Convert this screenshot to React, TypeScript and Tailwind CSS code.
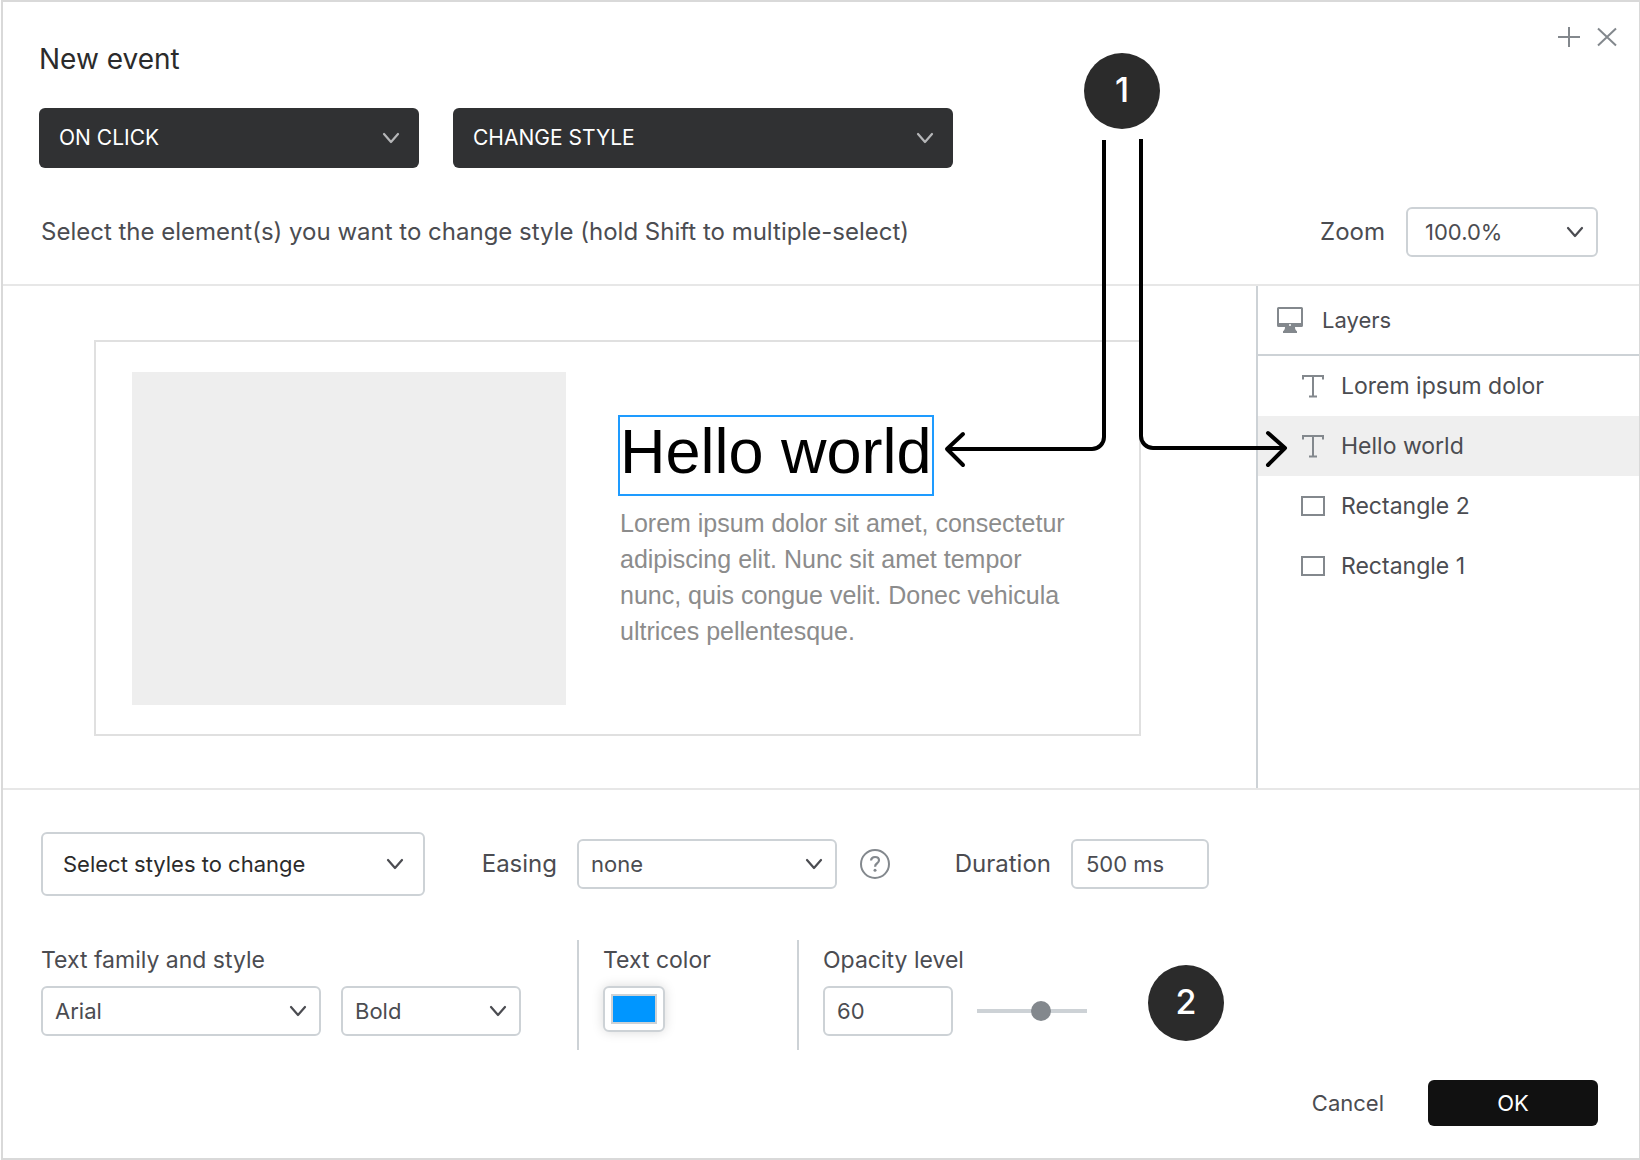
import { useState, type ReactNode } from "react";

const fieldBase =
  "w-full appearance-none rounded-md border-2 border-[#cdd2d6] bg-white text-[22px] text-[#4b4c51] outline-none focus:border-[#0096ff]";

function Chevron({ className }: { className: string }) {
  return (
    <svg
      viewBox="0 0 18 12"
      fill="none"
      stroke="currentColor"
      strokeWidth="2.2"
      strokeLinecap="round"
      strokeLinejoin="round"
      className={`pointer-events-none absolute top-1/2 h-3 w-[18px] -translate-y-1/2 ${className}`}
      aria-hidden="true"
    >
      <path d="M2 2l7 8 7-8" />
    </svg>
  );
}

function Select({
  id,
  label,
  options,
  wrapClass,
  selectClass,
  chevronClass = "right-3.5 text-[#4b4c51]",
}: {
  id: string;
  label?: string;
  options: string[];
  wrapClass: string;
  selectClass: string;
  chevronClass?: string;
}) {
  return (
    <div className={`relative shrink-0 ${wrapClass}`}>
      <select id={id} aria-label={label} className={selectClass}>
        {options.map((o) => (
          <option key={o}>{o}</option>
        ))}
      </select>
      <Chevron className={chevronClass} />
    </div>
  );
}

function TextIcon() {
  return (
    <svg viewBox="0 0 24 24" className="size-6" fill="none" stroke="#83888d" strokeWidth="2" aria-hidden="true">
      <path d="M2 5.500V2h20v3.500M12 2v20.500M8 22.500h8" />
    </svg>
  );
}

function RectIcon() {
  return (
    <svg viewBox="0 0 24 24" className="size-6" fill="none" stroke="#83888d" strokeWidth="2" aria-hidden="true">
      <path d="M1 3h22v18H1z" />
    </svg>
  );
}

function MonitorIcon() {
  return (
    <svg viewBox="0 0 26 26" className="size-[26px]" aria-hidden="true">
      <path
        fill="#83888d"
        fillRule="evenodd"
        d="M1.500 0h23A1.500 1.500 0 0 1 26 1.500v17a1.500 1.500 0 0 1-1.500 1.500H18c0 2 .6 3.400 2 4.300V26H6v-1.700c1.400-.9 2-2.300 2-4.300H1.500A1.500 1.500 0 0 1 0 18.500v-17A1.500 1.500 0 0 1 1.500 0zM2 2v14h22V2zM13 17a1 1 0 1 0 0 2 1 1 0 0 0 0-2z"
      />
    </svg>
  );
}

function Layer({ icon, name, selected }: { icon: ReactNode; name: string; selected?: boolean }) {
  return (
    <li>
      <button
        type="button"
        aria-pressed={!!selected}
        className={`flex h-15 w-full items-center gap-4 pl-[43px] text-left text-[23px] ${selected ? "bg-[#efefef]" : ""}`}
      >
        {icon}
        {name}
      </button>
    </li>
  );
}

function Callout({ n, className }: { n: number; className: string }) {
  return (
    <span
      className={`flex size-[76px] items-center justify-center rounded-full bg-[#2b2b2b] pb-0.5 text-[34px] font-medium text-white ${className}`}
    >
      {n}
    </span>
  );
}

export default function App() {
  const [opacity, setOpacity] = useState(60);

  return (
    <main className="relative ml-px flex min-h-screen flex-col border-2 border-r border-[#d9d9d9] bg-white font-['Inter',sans-serif] text-[22px] leading-7 text-[#4b4c51]">
      <header className="pr-[41px] pl-9">
        <div className="flex items-start justify-between">
          <h1 className="pt-[41px] text-[28px] leading-8 text-[#2b2b2b]">New event</h1>
          <div className="-mr-5 flex gap-4 pt-6">
            <button type="button" aria-label="Add event">
              <svg viewBox="0 0 22 22" className="size-[22px]" stroke="#83888d" strokeWidth="2" aria-hidden="true">
                <path d="M0 11h22M11 1v20" />
              </svg>
            </button>
            <button type="button" aria-label="Close">
              <svg viewBox="0 0 22 22" className="size-[22px]" stroke="#83888d" strokeWidth="2" aria-hidden="true">
                <path d="M2 2.500l18 17M20 2.500l-18 17" />
              </svg>
            </button>
          </div>
        </div>

        <div className="mt-[33px] flex gap-[34px]">
          <Select
            id="trigger"
            label="Trigger"
            options={["ON CLICK"]}
            wrapClass="w-[380px]"
            selectClass="h-15 w-full appearance-none rounded-md bg-[#303133] pl-5 text-[21px] text-white"
            chevronClass="right-[19px] text-[#b5b6b8]"
          />
          <Select
            id="action"
            label="Action"
            options={["CHANGE STYLE"]}
            wrapClass="w-[500px]"
            selectClass="h-15 w-full appearance-none rounded-md bg-[#303133] pl-5 text-[21px] text-white"
            chevronClass="right-[19px] text-[#b5b6b8]"
          />
        </div>

        <div className="mt-[39px] flex items-center justify-between pb-[27px]">
          <p className="pl-0.5 text-[24px]">
            Select the element(s) you want to change style (hold Shift to multiple-select)
          </p>
          <div className="flex items-center gap-[21px]">
            <label htmlFor="zoom" className="text-[24px]">
              Zoom
            </label>
            <Select
              id="zoom"
              options={["100.0%"]}
              wrapClass="w-48"
              selectClass={`${fieldBase} h-[50px] pl-[17px]`}
            />
          </div>
        </div>
      </header>

      <section className="relative flex border-y-2 border-[#e7e7e7]">
        <div className="flex flex-1 pt-[54px] pr-[115px] pb-[52px] pl-[91px]">
          <div className="flex h-[396px] flex-1 gap-[52px] border-2 border-[#e0e0e0] p-[30px] pl-9">
            <div className="h-[333px] flex-1 bg-[#eee]" />
            <div className="w-[491px] pt-[43px] font-['Liberation_Sans',Arial,sans-serif]">
              <h2 className="inline-block h-[81px] border-2 border-[#1e9bff] text-[63px] leading-[68px] whitespace-nowrap text-black">
                Hello world
              </h2>
              <p className="w-[470px] pt-[9px] pl-0.5 text-[25px] leading-9 text-[#8c8c8c]">
                Lorem ipsum dolor sit amet, consectetur adipiscing elit. Nunc sit amet tempor nunc, quis congue velit.
                Donec vehicula ultrices pellentesque.
              </p>
            </div>
          </div>
        </div>

        <aside className="w-[383px] border-l-2 border-[#cdd2d6]">
          <h2 className="flex h-[70px] items-center gap-[19px] border-b-2 border-[#cdd2d6] pl-[19px]">
            <MonitorIcon />
            Layers
          </h2>
          <ul>
            <Layer icon={<TextIcon />} name="Lorem ipsum dolor" />
            <Layer icon={<TextIcon />} name="Hello world" selected />
            <Layer icon={<RectIcon />} name="Rectangle 2" />
            <Layer icon={<RectIcon />} name="Rectangle 1" />
          </ul>
        </aside>
      </section>

      <div className="flex items-center pt-[42px] pl-[38px]">
        <Select
          id="styles"
          label="Styles"
          options={["Select styles to change"]}
          wrapClass="w-96"
          selectClass="h-16 w-full appearance-none rounded-md border-2 border-[#cdd2d6] bg-white pl-5 text-[22px] text-[#2b2b2b] outline-none focus:border-[#0096ff]"
          chevronClass="right-[21px] text-[#4b4c51]"
        />
        <label htmlFor="easing" className="w-[152px] pr-5 text-right text-[24px]">
          Easing
        </label>
        <Select
          id="easing"
          options={["none"]}
          wrapClass="w-[260px]"
          selectClass={`${fieldBase} h-[50px] pl-3`}
        />
        <button type="button" aria-label="About easing" className="ml-[23px]">
          <svg viewBox="0 0 30 30" className="size-[30px]" fill="none" stroke="#83888d" aria-hidden="true">
            <circle cx="15" cy="15" r="14" strokeWidth="2" />
            <path d="M11 11.500c.2-2.200 1.700-3.500 4-3.500s4 1.300 4 3.300c0 1.400-.7 2.200-2.100 3.200-1.300.9-1.800 1.600-1.800 3.200" strokeWidth="2.200" />
            <circle cx="15" cy="21.300" r="1.500" fill="#83888d" stroke="none" />
          </svg>
        </button>
        <label htmlFor="duration" className="w-[181px] pr-5 text-right text-[24px]">
          Duration
        </label>
        <div className="w-[138px] shrink-0">
          <input id="duration" defaultValue="500 ms" className={`${fieldBase} h-[50px] pl-[13px]`} />
        </div>
      </div>

      <div className="mt-11 flex pl-[38px]">
        <fieldset className="w-[536px] pt-1.5">
          <legend className="float-left mb-3 text-[23px]">Text family and style</legend>
          <div className="clear-both flex gap-5">
            <Select
              id="family"
              label="Text family"
              options={["Arial"]}
              wrapClass="w-[280px]"
              selectClass={`${fieldBase} h-[50px] pl-3`}
            />
            <Select
              id="weight"
              label="Text style"
              options={["Bold"]}
              wrapClass="w-[180px]"
              selectClass={`${fieldBase} h-[50px] pl-3`}
            />
          </div>
        </fieldset>
        <div className="flex h-[110px] w-[220px] flex-col items-start gap-3 border-l-2 border-[#cdd2d6] pt-1.5 pl-6">
          <label htmlFor="color" className="text-[23px]">
            Text color
          </label>
          <input
            id="color"
            type="color"
            defaultValue="#0096ff"
            className="h-[46px] w-[62px] appearance-none rounded-md border-2 border-[#cdd2d6] bg-white p-1.5 shadow-[0_0_12px_rgba(0,0,0,0.15)] [&::-webkit-color-swatch]:rounded-none [&::-webkit-color-swatch]:border-2 [&::-webkit-color-swatch]:border-[#cdd2d6] [&::-webkit-color-swatch-wrapper]:p-0"
          />
        </div>
        <div className="flex h-[110px] flex-col gap-3 border-l-2 border-[#cdd2d6] pt-1.5 pl-6">
          <label htmlFor="opacity" className="text-[23px]">
            Opacity level
          </label>
          <div className="flex items-center gap-6">
            <div className="w-[130px]">
              <input
                id="opacity"
                value={opacity}
                onChange={(e) => setOpacity(Number(e.target.value) || 0)}
                className={`${fieldBase} h-[50px] pl-3`}
              />
            </div>
            <input
              type="range"
              aria-label="Opacity"
              min={0}
              max={100}
              value={opacity}
              onChange={(e) => setOpacity(Number(e.target.value))}
              className="h-1 w-[110px] appearance-none bg-[#cdd2d6] [&::-webkit-slider-thumb]:size-5 [&::-webkit-slider-thumb]:appearance-none [&::-webkit-slider-thumb]:rounded-full [&::-webkit-slider-thumb]:bg-[#83888d]"
            />
          </div>
        </div>
        <Callout n={2} className="mt-[25px] ml-[61px]" />
      </div>

      <footer className="mt-[30px] flex items-center justify-end gap-11 pr-[41px] pb-8">
        <button type="button">Cancel</button>
        <button type="button" className="h-[46px] w-[170px] rounded-md bg-[#111] text-white">
          OK
        </button>
      </footer>

      <div className="pointer-events-none absolute top-[51px] right-[345px] w-[350px]">
        <Callout n={1} className="ml-[140px]" />
        <svg
          viewBox="0 0 350 336"
          className="mt-2 h-[336px] w-[350px]"
          fill="none"
          stroke="#000"
          strokeWidth="4"
          aria-hidden="true"
        >
          <path d="M160 3v297a12 12 0 0 1-12 12H4" />
          <path d="M19 297L3 312l16 16" strokeLinecap="round" strokeLinejoin="round" />
          <path d="M197 2v297a12 12 0 0 0 12 12h131" />
          <path d="M324 296l17 15-17 17" strokeLinecap="round" strokeLinejoin="round" />
        </svg>
      </div>
    </main>
  );
}
